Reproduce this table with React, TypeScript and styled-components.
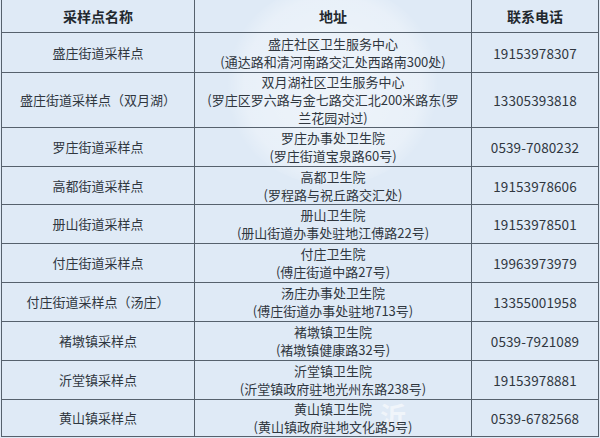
import React from 'react'
import styled, { createGlobalStyle } from 'styled-components'

const GlobalStyle = createGlobalStyle`
    html, body {
        margin: 0;
        padding: 0;
        background: #dfeaf6;
    }
    body {
        font-family: "Noto Sans CJK SC", "Noto Sans", sans-serif;
        color: #333a42;
    }
`

const Page = styled.div`
    position: relative;
    width: 600px;
    height: 438px;
    overflow: hidden;
`

const Table = styled.div`
    position: relative;
    z-index: 1;
    display: grid;
    grid-template-columns: 193px 277px 1fr;
    grid-template-rows: 33px 40px 55px 39px 38px repeat(5, 39px) 37px;
    width: 598px;
    margin-left: 1px;
    border-left: 1px solid #56616d;
    box-sizing: border-box;
`

const Cell = styled.div<{ $head?: boolean }>`
    box-sizing: border-box;
    border-right: 1px solid #56616d;
    border-bottom: 1px solid #56616d;
    display: flex;
    align-items: center;
    justify-content: center;
    text-align: center;
    padding: 0 8px;
    font-size: ${p => (p.$head ? '14px' : '13px')};
    font-weight: ${p => (p.$head ? 700 : 400)};
    color: ${p => (p.$head ? '#22282e' : '#30373f')};
    line-height: 18px;
`

const Phone = styled(Cell)`
    font-size: 13.5px;
    letter-spacing: 0.1px;
`

const Glow = styled.div`
    position: absolute;
    z-index: 0;
    left: 225px;
    top: -15px;
    width: 215px;
    height: 200px;
    border-radius: 50%;
    background: radial-gradient(circle, rgba(255,255,255,0.5) 0%, rgba(255,255,255,0.3) 60%, rgba(255,255,255,0) 72%);
    pointer-events: none;
`

const Mark = styled.div`
    position: absolute;
    z-index: 0;
    left: 380px;
    top: 396px;
    font-size: 26px;
    font-weight: 700;
    color: rgba(255, 255, 255, 0.55);
    pointer-events: none;
`

const rows: [string, string[], string][] = [
    ['盛庄街道采样点', ['盛庄社区卫生服务中心', '(通达路和清河南路交汇处西路南300处)'], '19153978307'],
    ['盛庄街道采样点（双月湖）', ['双月湖社区卫生服务中心', '(罗庄区罗六路与金七路交汇北200米路东(罗兰花园对过)'], '13305393818'],
    ['罗庄街道采样点', ['罗庄办事处卫生院', '(罗庄街道宝泉路60号)'], '0539-7080232'],
    ['高都街道采样点', ['高都卫生院', '(罗程路与祝丘路交汇处)'], '19153978606'],
    ['册山街道采样点', ['册山卫生院', '(册山街道办事处驻地江傅路22号)'], '19153978501'],
    ['付庄街道采样点', ['付庄卫生院', '(傅庄街道中路27号)'], '19963973979'],
    ['付庄街道采样点（汤庄）', ['汤庄办事处卫生院', '(傅庄街道办事处驻地713号)'], '13355001958'],
    ['褚墩镇采样点', ['褚墩镇卫生院', '(褚墩镇健康路32号)'], '0539-7921089'],
    ['沂堂镇采样点', ['沂堂镇卫生院', '(沂堂镇政府驻地光州东路238号)'], '19153978881'],
    ['黄山镇采样点', ['黄山镇卫生院', '(黄山镇政府驻地文化路5号)'], '0539-6782568'],
]

const App: React.FC = () => {
    return (
        <Page>
            <GlobalStyle />
            <Glow />
            <Mark>沂</Mark>
            <Table>
                <Cell $head>采样点名称</Cell>
                <Cell $head>地址</Cell>
                <Cell $head>联系电话</Cell>
                {rows.map(([name, addr, phone]) => (
                    <React.Fragment key={name}>
                        <Cell>{name}</Cell>
                        <Cell>
                            <div>
                                {addr[0]}
                                <br />
                                {addr[1]}
                            </div>
                        </Cell>
                        <Phone>{phone}</Phone>
                    </React.Fragment>
                ))}
            </Table>
        </Page>
    )
}

export default App
